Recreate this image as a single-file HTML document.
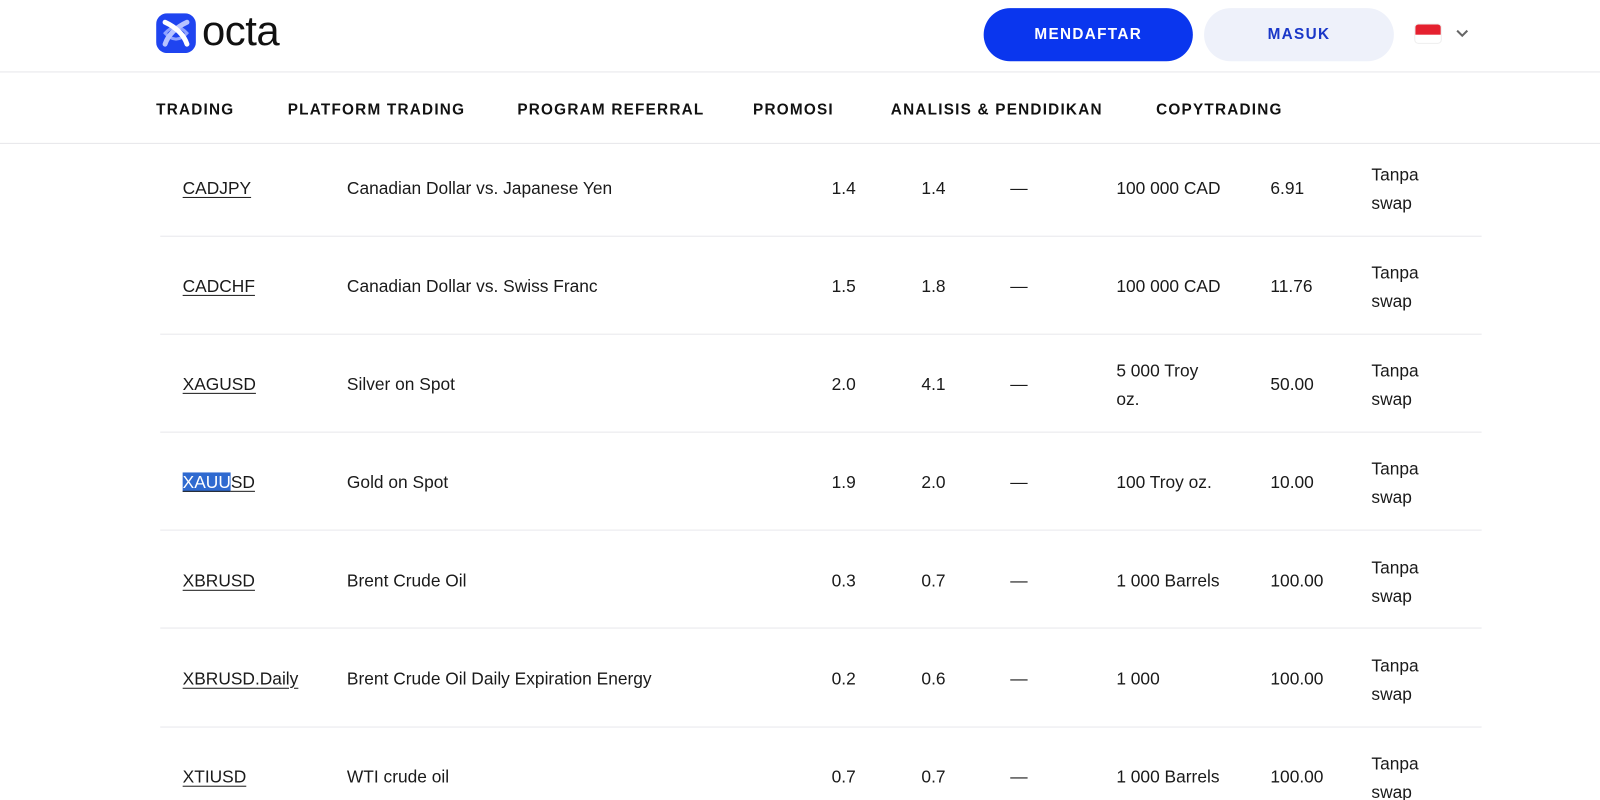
<!DOCTYPE html>
<html><head><meta charset="utf-8"><style>
*{margin:0;padding:0;box-sizing:border-box}
html,body{width:1600px;height:800px;overflow:hidden;background:#fff}
body{font-family:"Liberation Sans",Arial,sans-serif;color:#1a1a1a;position:relative}
#w{position:absolute;left:0;top:0;width:1568px;height:784px;transform:scale(1.0204);transform-origin:0 0}
.hdr{position:absolute;left:0;top:0;width:1568px;height:71px;border-bottom:1px solid #e6e6ea}
.nav{position:absolute;left:0;top:71px;width:1568px;height:70px;border-bottom:1px solid #e6e6ea}
.nav span{position:absolute;top:28px;font-weight:bold;font-size:15px;letter-spacing:1.2px;color:#111}
.btn{position:absolute;top:8px;height:52px;border-radius:26px;font-weight:bold;font-size:15px;letter-spacing:1.3px;text-align:center;line-height:52px}
.row{position:absolute;left:157px;width:1295px;height:96px;border-bottom:1px solid #e8e8ec;font-size:17px}
.row div{position:absolute}
.row div.t{left:1187px;top:22px;line-height:28px}
.sym{left:22px;text-decoration:underline;text-underline-offset:3px}
.sel{background:#2f6ad0;color:#fff}
</style></head><body><div id="w">
<div class="hdr">
<svg style="position:absolute;left:153px;top:13px" width="39" height="39" viewBox="0 0 40 40"><rect x="0" y="0" width="40" height="40" rx="11" fill="#1f44f0"/><path d="M9 20 C16 12 24 12 31 20 C24 28 16 28 9 20Z" stroke="#8fa2ff" stroke-width="3" fill="none"/><path d="M31 9 C20 14 12 22 9 31" stroke="#b7c3ff" stroke-width="5" fill="none" stroke-linecap="round"/><path d="M9 9 C20 14 28 22 31 31" stroke="#fff" stroke-width="5" fill="none" stroke-linecap="round"/></svg>
<div style="position:absolute;left:198px;top:7px;font-size:41px;font-weight:normal;letter-spacing:-0.5px;color:#111">octa</div>
<div class="btn" style="left:964px;width:205px;background:#0a36ee;color:#fff">MENDAFTAR</div>
<div class="btn" style="left:1180px;width:186px;background:#eef1fa;color:#1a37c8">MASUK</div>
<div style="position:absolute;left:1386px;top:23px;width:27px;height:20px;border-radius:4px;overflow:hidden;border:1px solid #eee"><div style="height:10px;background:#e5212f"></div></div>
<svg style="position:absolute;left:1426px;top:28px" width="14" height="10"><path d="M2 2 L7 7 L12 2" stroke="#666" stroke-width="2" fill="none"/></svg>
</div>
<div class="nav">
<span style="left:153px">TRADING</span>
<span style="left:282px">PLATFORM TRADING</span>
<span style="left:507px">PROGRAM REFERRAL</span>
<span style="left:738px">PROMOSI</span>
<span style="left:873px">ANALISIS &amp; PENDIDIKAN</span>
<span style="left:1133px">COPYTRADING</span>
</div>

<div class="row" style="top:136px"><div class="sym" style="top:39px">CADJPY</div><div style="left:183px;top:39px">Canadian Dollar vs. Japanese Yen</div><div style="left:658px;top:39px">1.4</div><div style="left:746px;top:39px">1.4</div><div style="left:833px;top:39px">—</div><div style="left:937px;top:39px">100 000 CAD</div><div style="left:1088px;top:39px">6.91</div><div class="t">Tanpa<br>swap</div></div>
<div class="row" style="top:232px"><div class="sym" style="top:39px">CADCHF</div><div style="left:183px;top:39px">Canadian Dollar vs. Swiss Franc</div><div style="left:658px;top:39px">1.5</div><div style="left:746px;top:39px">1.8</div><div style="left:833px;top:39px">—</div><div style="left:937px;top:39px">100 000 CAD</div><div style="left:1088px;top:39px">11.76</div><div class="t">Tanpa<br>swap</div></div>
<div class="row" style="top:328px"><div class="sym" style="top:39px">XAGUSD</div><div style="left:183px;top:39px">Silver on Spot</div><div style="left:658px;top:39px">2.0</div><div style="left:746px;top:39px">4.1</div><div style="left:833px;top:39px">—</div><div style="left:937px;top:22px;line-height:28px">5 000 Troy<br>oz.</div><div style="left:1088px;top:39px">50.00</div><div class="t">Tanpa<br>swap</div></div>
<div class="row" style="top:424px"><div class="sym" style="top:39px"><span class="sel">XAUU</span>SD</div><div style="left:183px;top:39px">Gold on Spot</div><div style="left:658px;top:39px">1.9</div><div style="left:746px;top:39px">2.0</div><div style="left:833px;top:39px">—</div><div style="left:937px;top:39px">100 Troy oz.</div><div style="left:1088px;top:39px">10.00</div><div class="t">Tanpa<br>swap</div></div>
<div class="row" style="top:520px"><div class="sym" style="top:40px">XBRUSD</div><div style="left:183px;top:40px">Brent Crude Oil</div><div style="left:658px;top:40px">0.3</div><div style="left:746px;top:40px">0.7</div><div style="left:833px;top:40px">—</div><div style="left:937px;top:40px">1 000 Barrels</div><div style="left:1088px;top:40px">100.00</div><div class="t" style="top:23px">Tanpa<br>swap</div></div>
<div class="row" style="top:617px"><div class="sym" style="top:39px">XBRUSD.Daily</div><div style="left:183px;top:39px">Brent Crude Oil Daily Expiration Energy</div><div style="left:658px;top:39px">0.2</div><div style="left:746px;top:39px">0.6</div><div style="left:833px;top:39px">—</div><div style="left:937px;top:39px">1 000</div><div style="left:1088px;top:39px">100.00</div><div class="t">Tanpa<br>swap</div></div>
<div class="row" style="top:713px"><div class="sym" style="top:39px">XTIUSD</div><div style="left:183px;top:39px">WTI crude oil</div><div style="left:658px;top:39px">0.7</div><div style="left:746px;top:39px">0.7</div><div style="left:833px;top:39px">—</div><div style="left:937px;top:39px">1 000 Barrels</div><div style="left:1088px;top:39px">100.00</div><div class="t">Tanpa<br>swap</div></div>
</div></body></html>
